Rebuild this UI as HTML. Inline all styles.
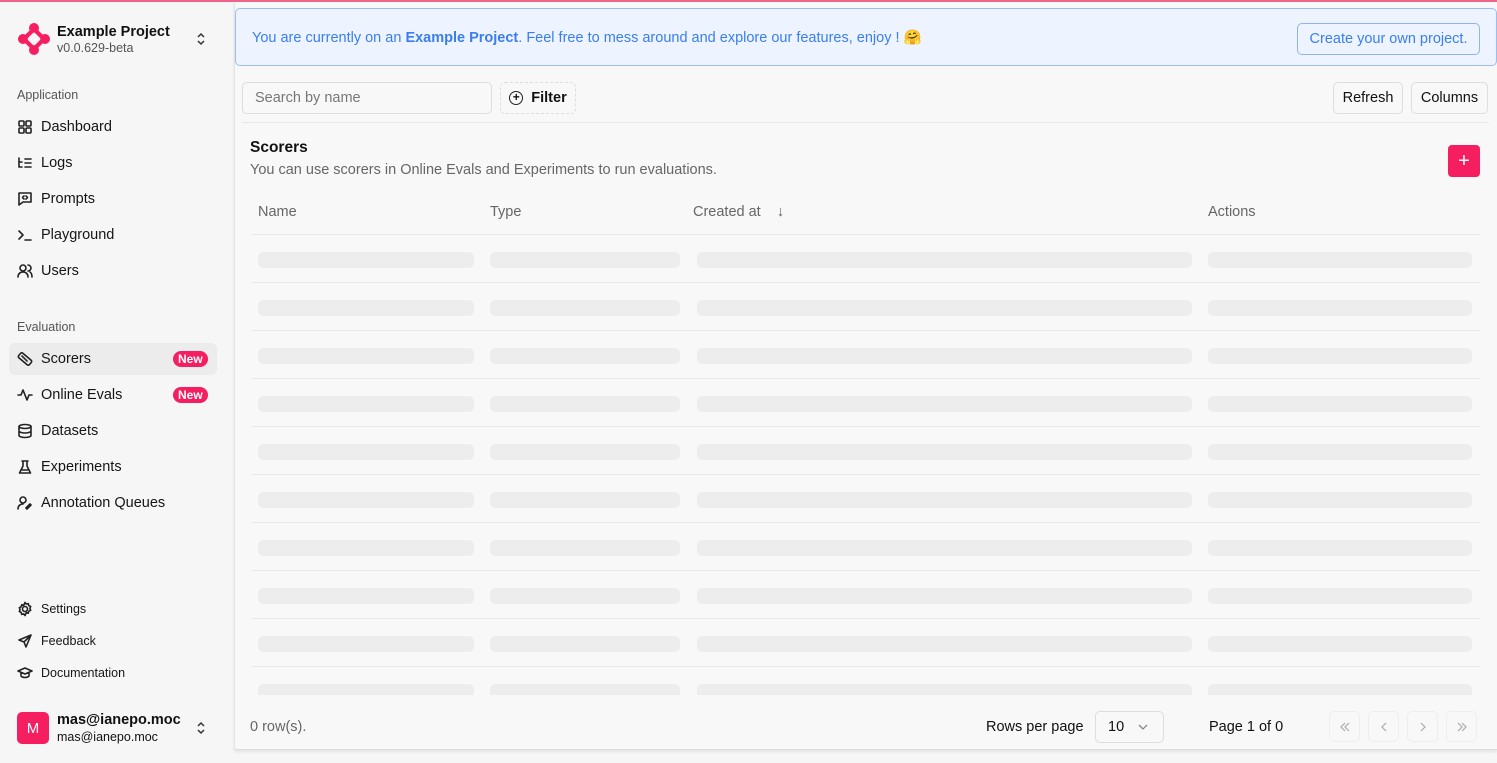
<!DOCTYPE html>
<html><head><meta charset="utf-8"><style>
*{box-sizing:border-box;margin:0;padding:0}
body{width:1497px;height:763px;overflow:hidden;background:#f6f6f6;font-family:"Liberation Sans",sans-serif;color:#111;position:relative;font-size:14px}
.top{position:absolute;left:0;top:0;width:1497px;height:2px;background:#f0648a}
.sb{position:absolute;left:0;top:2px;width:234px;height:761px;background:#f6f6f6}
.it{position:absolute;left:17px;display:flex;align-items:center;font-size:14.5px;color:#151515}
.it svg{width:16px;height:16px;margin-right:8px;stroke:#222;fill:none;stroke-width:1.6;stroke-linecap:round;stroke-linejoin:round}
.sm{font-size:12.5px}
.sec{position:absolute;left:17px;font-size:12.5px;color:#555}
.new{position:absolute;left:173px;background:#f51e60;color:#fff;font-weight:bold;font-size:12px;border-radius:8px;padding:1px 5px;line-height:14px}
.main{position:absolute;left:234px;top:2px;width:1263px;height:748px;background:#f8f8f8;border-left:1px solid #e4e4e4;border-bottom:1px solid #ddd;box-shadow:0 2px 3px rgba(0,0,0,.08)}
.ban{position:absolute;left:0;top:6px;width:1262px;height:58px;background:#edf4ff;border:1px solid #9bbcf5;border-radius:5px;color:#3a7ef0;font-size:14.5px}
.btn{position:absolute;border:1px solid #ddd;border-radius:5px;background:#f8f8f8;font-size:14.5px;display:flex;align-items:center;justify-content:center}
.row{position:absolute;left:16px;width:1230px;height:1px;background:#e9e9e9}
.sk{position:absolute;height:16px;background:#ededed;border-radius:5px}
.th{position:absolute;top:202px;color:#666;font-size:14.5px}
.pg{position:absolute;top:709px;width:31px;height:31px;border:1px solid #eee;border-radius:5px;display:flex;align-items:center;justify-content:center}
.pg svg{width:12px;height:12px;stroke:#aaa;fill:none;stroke-width:1.2}
.chev{position:absolute;width:10px;height:14px;stroke:#333;fill:none;stroke-width:1.5}
</style></head><body>
<div class="top"></div>
<div class="sb">
 <svg style="position:absolute;left:17px;top:20px" width="34" height="34" viewBox="0 0 34 34"><g fill="#f51e60"><ellipse cx="17" cy="6" rx="5" ry="5"/><ellipse cx="17" cy="28" rx="5" ry="5"/><ellipse cx="6" cy="17" rx="5" ry="5"/><ellipse cx="28" cy="17" rx="5" ry="5"/><path d="M13 8 L21 8 L26 13 L26 21 L21 26 L13 26 L8 21 L8 13Z"/></g><rect x="12" y="12" width="10" height="10" rx="2" transform="rotate(45 17 17)" fill="#f6f6f6"/></svg>
 <div style="position:absolute;left:57px;top:22px;font-weight:bold;font-size:14.5px">Example Project</div>
 <div style="position:absolute;left:57px;top:39px;font-size:12.5px;color:#555">v0.0.629-beta</div>
 <svg class="chev" style="left:196px;top:30px" viewBox="0 0 10 14"><path d="M2 5l3-3 3 3M2 9l3 3 3-3"/></svg>
 <div class="sec" style="top:86px">Application</div>
 <div class="it" style="top:117px"><svg viewBox="0 0 16 16"><rect x="2" y="2" width="5" height="5" rx="1"/><rect x="9" y="2" width="5" height="5" rx="1"/><rect x="2" y="9" width="5" height="5" rx="1"/><rect x="9" y="9" width="5" height="5" rx="1"/></svg>Dashboard</div>
 <div class="it" style="top:153px"><svg viewBox="0 0 16 16"><path d="M2 3v9h3M2 7h3M8 4h6M8 8h6M8 12h6"/></svg>Logs</div>
 <div class="it" style="top:189px"><svg viewBox="0 0 16 16"><path d="M2 2h12v9H6l-4 3z"/><path d="M7 5l-1.5 1.5L7 8M9 5l1.5 1.5L9 8"/></svg>Prompts</div>
 <div class="it" style="top:225px"><svg viewBox="0 0 16 16"><path d="M2 4l4 4-4 4M8 13h6"/></svg>Playground</div>
 <div class="it" style="top:261px"><svg viewBox="0 0 16 16"><circle cx="6" cy="5" r="3"/><path d="M1 14c0-3 2-5 5-5s5 2 5 5M11 2a3 3 0 010 6M13 9c1.5 1 2 3 2 5"/></svg>Users</div>
 <div class="sec" style="top:318px">Evaluation</div>
 <div style="position:absolute;left:9px;top:341px;width:208px;height:32px;background:#ececec;border-radius:6px"></div>
 <div class="it" style="top:349px"><svg viewBox="0 0 16 16"><rect x="1" y="5" width="14" height="6" rx="1.5" transform="rotate(40 8 8)"/><path d="M5 5l1 1M7 7l1 1M9 9l1 1"/></svg>Scorers</div>
 <div class="new" style="top:349px">New</div>
 <div class="it" style="top:385px"><svg viewBox="0 0 16 16"><path d="M1 8h3l2-5 4 10 2-5h3"/></svg>Online Evals</div>
 <div class="new" style="top:385px">New</div>
 <div class="it" style="top:421px"><svg viewBox="0 0 16 16"><ellipse cx="8" cy="3.5" rx="6" ry="2"/><path d="M2 3.5v9c0 1 3 2 6 2s6-1 6-2v-9M2 8c0 1 3 2 6 2s6-1 6-2"/></svg>Datasets</div>
 <div class="it" style="top:457px"><svg viewBox="0 0 16 16"><path d="M6 2v5l-3.5 7h11L10 7V2M5 2h6M4 11h8"/></svg>Experiments</div>
 <div class="it" style="top:493px"><svg viewBox="0 0 16 16"><circle cx="6" cy="5" r="3"/><path d="M1 14c0-3 2-5 5-5M10 14l4-4-1-1-4 4z"/></svg>Annotation Queues</div>
 <div class="it sm" style="top:599px"><svg viewBox="0 0 16 16"><circle cx="8" cy="8" r="2.5"/><path d="M8 1.5l1.3 1.6 2-.5.5 2 1.9.9-.8 1.9.8 1.9-1.9.9-.5 2-2-.5L8 14.5l-1.3-1.6-2 .5-.5-2-1.9-.9.8-1.9-.8-1.9 1.9-.9.5-2 2 .5z"/></svg>Settings</div>
 <div class="it sm" style="top:631px"><svg viewBox="0 0 16 16"><path d="M14 2L2 7l5 2 2 5z M7 9l7-7"/></svg>Feedback</div>
 <div class="it sm" style="top:663px"><svg viewBox="0 0 16 16"><path d="M1 6l7-3 7 3-7 3z M4 7.5v3.5c2 2 6 2 8 0V7.5"/></svg>Documentation</div>
 <div style="position:absolute;left:17px;top:710px;width:32px;height:32px;background:#f51e60;border-radius:5px;color:#fff;font-size:15px;display:flex;align-items:center;justify-content:center">M</div>
 <div style="position:absolute;left:57px;top:710px;font-weight:bold;font-size:14.5px">mas@ianepo.moc</div>
 <div style="position:absolute;left:57px;top:728px;font-size:12.5px">mas@ianepo.moc</div>
 <svg class="chev" style="left:196px;top:719px" viewBox="0 0 10 14"><path d="M2 5l3-3 3 3M2 9l3 3 3-3"/></svg>
</div>
<div class="main">
 <div class="ban"><div style="position:absolute;left:16px;top:20px">You are currently on an <b>Example Project</b>. Feel free to mess around and explore our features, enjoy ! 🤗</div>
  <div style="position:absolute;left:1061px;top:14px;width:183px;height:32px;border:1px solid #8fb3f3;border-radius:5px;display:flex;align-items:center;justify-content:center">Create your own project.</div></div>
 <div class="btn" style="left:7px;top:80px;width:250px;height:32px;justify-content:flex-start;padding-left:12px;color:#777">Search by name</div>
 <div class="btn" style="left:265px;top:80px;width:76px;height:32px;border-style:dashed;font-weight:bold"><span style="display:inline-block;width:14px;height:14px;border:1.5px solid #222;border-radius:50%;font-size:12px;line-height:10px;text-align:center;margin-right:8px">+</span>Filter</div>
 <div class="btn" style="left:1098px;top:80px;width:70px;height:32px">Refresh</div>
 <div class="btn" style="left:1176px;top:80px;width:77px;height:32px">Columns</div>
 <div class="row" style="top:120px;left:7px;width:1247px;background:#e3e8ee"></div>
 <div style="position:absolute;left:15px;top:137px;font-weight:bold;font-size:15.5px">Scorers</div>
 <div style="position:absolute;left:15px;top:160px;color:#666;font-size:14.5px">You can use scorers in Online Evals and Experiments to run evaluations.</div>
 <div style="position:absolute;left:1213px;top:143px;width:32px;height:32px;background:#f51e60;border-radius:4px;color:#fff;font-size:20px;display:flex;align-items:center;justify-content:center">+</div>
 <div class="th" style="left:23px">Name</div><div class="th" style="left:255px">Type</div><div class="th" style="left:458px">Created at &nbsp;&nbsp;&nbsp;↓</div><div class="th" style="left:973px">Actions</div>
 <div style="position:absolute;left:0;top:232px;width:1262px;height:461px;overflow:hidden">
  <div id="rows"></div>
 </div>
 <div style="position:absolute;left:15px;top:717px;color:#666;font-size:14.5px">0 row(s).</div>
 <div style="position:absolute;left:751px;top:717px;font-size:14.5px">Rows per page</div>
 <div style="position:absolute;left:860px;top:709px;width:69px;height:32px;border:1px solid #ddd;border-radius:5px;padding:7px 12px;font-size:14.5px">10 <svg style="position:absolute;left:42px;top:12px" width="10" height="6" viewBox="0 0 10 6"><path d="M1 1l4 4 4-4" stroke="#888" fill="none" stroke-width="1.3"/></svg></div>
 <div style="position:absolute;left:974px;top:717px;font-size:14.5px">Page 1 of 0</div>
 <div class="pg" style="left:1094px"><svg viewBox="0 0 12 12"><path d="M6 2L2 6l4 4M10 2L6 6l4 4"/></svg></div>
 <div class="pg" style="left:1133px"><svg viewBox="0 0 12 12"><path d="M8 2L4 6l4 4"/></svg></div>
 <div class="pg" style="left:1172px"><svg viewBox="0 0 12 12"><path d="M4 2l4 4-4 4"/></svg></div>
 <div class="pg" style="left:1211px"><svg viewBox="0 0 12 12"><path d="M2 2l4 4-4 4M6 2l4 4-4 4"/></svg></div>
</div>
<script>
var h='';for(var i=0;i<10;i++){var t=i*48;h+='<div class="row" style="top:'+t+'px"></div>';var y=t+18;
[[23,216],[255,190],[462,495],[973,264]].forEach(function(c){h+='<div class="sk" style="top:'+y+'px;left:'+c[0]+'px;width:'+c[1]+'px"></div>'})}
document.getElementById('rows').innerHTML=h;
</script>
</body></html>
